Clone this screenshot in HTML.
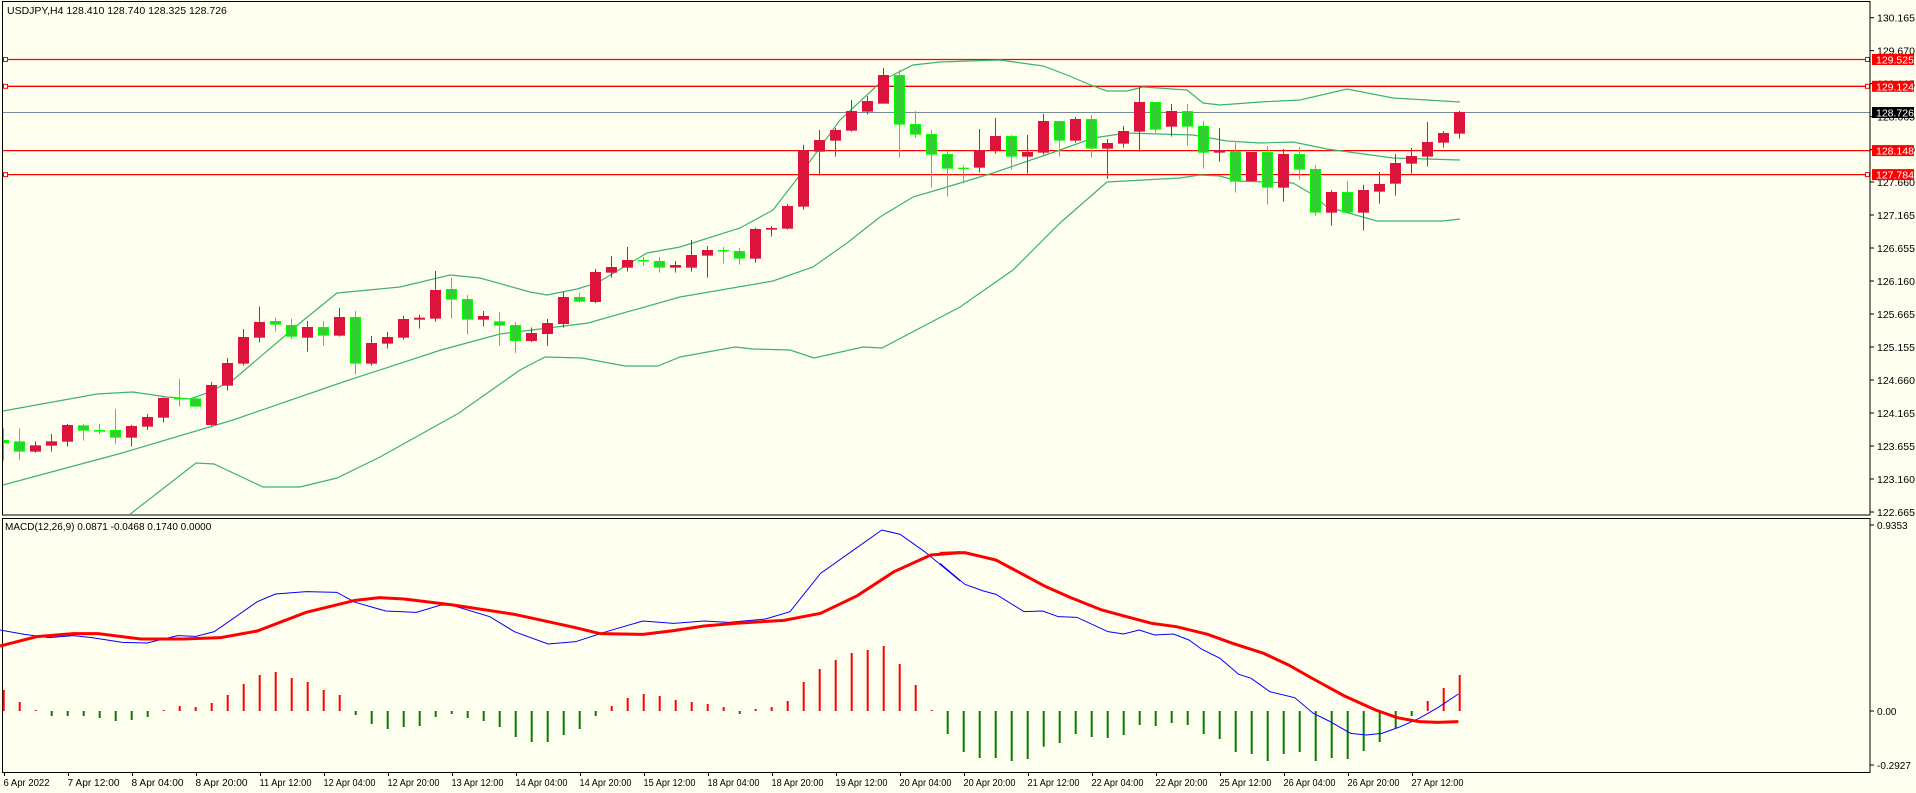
<!DOCTYPE html>
<html><head><meta charset="utf-8">
<style>
html,body{margin:0;padding:0;background:#fffff0;}
svg{display:block;font-family:"Liberation Sans",sans-serif;}
</style></head>
<body>
<svg id="s" width="1916" height="793" viewBox="0 0 1916 793" xmlns="http://www.w3.org/2000/svg">
<rect width="1916" height="793" fill="#fffff0"/>
<g id="g"></g>
<text x="7" y="14" font-size="10.5" fill="#000">USDJPY,H4  128.410 128.740 128.325 128.726</text>
<text x="5" y="530" font-size="10" fill="#000">MACD(12,26,9) 0.0871 -0.0468 0.1740 0.0000</text>
</svg>
<script>
var o='';
function L(x1,y1,x2,y2,c,w){o+='<line x1="'+x1+'" y1="'+y1+'" x2="'+x2+'" y2="'+y2+'" stroke="'+c+'" stroke-width="'+(w||1)+'"/>';}
function R(x,y,w,h,f,s){o+='<rect x="'+x+'" y="'+y+'" width="'+w+'" height="'+h+'" fill="'+f+'"'+(s?' stroke="'+s+'" stroke-width="1"':'')+'/>';}
function P(pts,c,w){o+='<polyline fill="none" stroke="'+c+'" stroke-width="'+w+'" points="'+pts.map(function(p){return p[0]+','+p[1]}).join(' ')+'"/>';}
function T(x,y,t,c,sz,a){o+='<text x="'+x+'" y="'+y+'" font-size="'+(sz||10.5)+'" fill="'+(c||'#000')+'"'+(a?' text-anchor="'+a+'"':'')+'>'+t+'</text>';}
L(3,112.5,1870,112.5,'#778899',1);
[59.5,86.3,150.6,174.6].forEach(function(y){L(3,y,1870,y,'#ff0000',1.3);});
var up=[[3,411],[97,394],[133,392],[167,397],[190,399],[207,393],[233,380],[300,323],[337,293],[400,287],[450,275],[480,278],[530,292],[547,295],[577,289],[597,283],[647,253],[680,247],[740,228],[773,210],[800,175],[840,120],[883,80],[913,65],[940,62],[1000,60],[1043,66],[1067,75],[1093,86],[1107,91],[1127,91],[1143,87],[1187,90],[1203,103],[1220,105],[1260,102],[1300,100],[1347,89],[1393,98],[1460,102]];
var mid=[[3,485],[122,453],[233,420],[343,382],[441,350],[500,334],[588,323],[680,297],[773,281],[813,267],[847,243],[880,217],[913,197],[947,187],[993,173],[1060,150],[1093,138],[1127,133],[1193,135],[1227,141],[1260,143],[1293,142],[1327,149],[1393,158],[1460,160]];
var lo=[[110,530],[129,515],[196,463],[214,464],[263,487],[300,487],[337,478],[380,457],[459,413],[520,370],[545,357],[582,358],[625,366],[658,366],[680,357],[735,347],[753,349],[790,350],[814,358],[863,347],[882,348],[960,307],[1013,270],[1060,223],[1107,182],[1180,178],[1200,175],[1220,176],[1237,181],[1293,183],[1310,193],[1327,207],[1377,221],[1443,221],[1460,219]];
o+='<clipPath id="cp"><rect x="3" y="2" width="1867" height="512"/></clipPath><g clip-path="url(#cp)">';
P(up,'#3cb371',1.2);P(mid,'#3cb371',1.2);P(lo,'#3cb371',1.2);
var A=[['g',780,790,745,842],['g',784,815,745,840],['r',796,815,784,818],['r',784,797,762,815],['r',735,785,732,800],['g',736,752,732,782],['g',750,755,732,762],['g',750,773,687,792],['r',738,773,735,800],['r',711,740,702,750],['r',654,713,652,728],['g',654,657,597,680],['g',655,680,650,680],['r',615,735,606,738],['r',549,617,534,632],['r',471,551,447,557],['r',426,473,380,487],['g',423,434,413,455],['g',435,470,416,477],['r',441,473,423,515],['g',441,467,423,497],['r',411,467,384,470],['g',411,551,393,584],['r',489,551,468,557],['r',471,491,456,506],['r',417,473,408,479],['r',413,419,404,446],['r',330,416,273,425],['g',327,359,294,416],['g',357,419,345,464],['r',408,419,393,440],['g',424,437,396,497]];
var B=[['g',855,903,846,939],['r',879,903,862,906],['r',849,882,837,918],['r',771,852,756,863],['g',771,785,759,788],['r',696,786,687,789],['r',681,698,648,713],['r',660,683,621,695],['g',660,664,651,677],['g',663,683,651,698],['r',675,683,663,698],['r',645,683,600,695],['r',630,647,618,713],['g',630,634,621,671],['g',633,656,624,674],['r',567,656,564,668],['r',564,569,558,590],['r',498,566,492,569],['r',330,500,315,509],['r',300,335,270,407],['r',270,302,264,350],['r',213,272,180,275],['r',183,215,168,224],['r',105,191,84,191],['g',105,254,90,353],['g',252,284,213,293],['g',282,344,270,443],['g',342,386,333,470],['g',383,386,377,431]];
var Cc=[['r',300,353,237,368],['r',258,300,204,311],['g',258,320,255,359],['r',306,320,255,371],['r',213,308,192,314],['g',213,272,213,320],['r',207,272,201,278],['g',207,296,195,323],['r',279,296,267,386],['r',243,281,228,293],['r',156,245,111,305],['g',156,239,156,248],['r',183,230,162,260],['g',183,230,162,287],['g',228,308,213,356],['r',300,308,234,335],['g',303,395,278,428],['r',306,393,306,395],['g',306,413,288,464],['r',312,413,297,455],['g',312,359,291,389],['g',357,488,345,497],['r',426,488,420,527],['g',426,488,393,491],['r',420,488,405,542],['r',402,425,366,461],['r',339,401,312,437],['r',318,341,294,371],['r',276,320,216,350],['r',249,278,243,293],['r',186,251,183,266]];
var all=[];
A.forEach(function(c){all.push([c[0],180+c[1]/3,180+c[2]/3,180+c[3]/3,180+c[4]/3]);});
B.forEach(function(c){all.push([c[0],40+c[1]/3,40+c[2]/3,40+c[3]/3,40+c[4]/3]);});
Cc.forEach(function(c){all.push([c[0],50+c[1]/3,50+c[2]/3,50+c[3]/3,50+c[4]/3]);});
all.forEach(function(c,i){
 var x=Math.round(3.3+16*i)+0.5;
 var col=c[0]=='r'?'#dc143c':'#00ff00';
 L(x,c[3],x,c[4],col,1);
 var h=Math.max(1,c[2]-c[1]);
 if(c[0]=='r')R(x-5.5,c[1],11,h,'#dc143c');
 else{ if(h<3)R(x-5.5,c[1],11,Math.max(1.5,h),'#00ff00');else R(x-5,c[1]+0.5,10,h-1,'#32cd32','#00ff00');}
});
o+='</g>';
[59.5,86.3,174.6].forEach(function(y){R(3.5,y-2,4,4,'#fffff0','#ff0000');R(1865.5,y-2,4,4,'#fffff0','#ff0000');});
R(2.5,1.5,1867.5,513.5,'none','#000');
R(2.5,518.5,1867.5,254,'none','#000');
var pl=[['130.165',17.7],['129.670',50.6],['129.165',83.6],['128.665',116.6],['128.160',149.6],['127.660',182],['127.165',215],['126.655',248],['126.160',281],['125.665',314],['125.155',347],['124.660',380],['124.165',413],['123.655',446],['123.160',479],['122.665',512]];
pl.forEach(function(p){L(1870,p[1],1874,p[1],'#000',1);T(1877,p[1]+4,p[0]);});
[['129.525',59.5,'#ff0000'],['129.124',86.3,'#ff0000'],['128.726',112.5,'#000'],['128.148',150.6,'#ff0000'],['127.784',174.6,'#ff0000']].forEach(function(b){R(1872,b[1]-5.5,42,11,b[2]);T(1876,b[1]+4,b[0],'#fff',10.5);});
[['0.9353',525],['0.00',711],['-0.2927',765]].forEach(function(p){L(1870,p[1],1874,p[1],'#000',1);T(1877,p[1]+4,p[0],'#000',10);});
var h7=[525,561,585,603,603,603,609,618,615,606,585,573,576,564,540,507,480,471,489,501,525,540,600,627,642,636,633,606,597,609,618,636,666,681,681,660,642,603,573,549,537,543,555,561,567,576,597,582,576,558,501,462,435,414,405,393,447,510,585,657,711,729,729,738,732,695,684,657,666,669,660,630,633,624,630,657,672,711,717,738,717,711,738,729,732,708,681,640,603,558,519,480];
var redIdx={};[0,1,2,10,11,12,13,14,15,16,17,18,19,20,21,38,39,40,41,42,43,44,45,47,48,49,50,51,52,53,54,55,56,57,58,89,90,91].forEach(function(i){redIdx[i]=1;});
var zero=711;
h7.forEach(function(z,i){var x=3.7+16*i;var y=515+z/3;L(x,zero,x,y,redIdx[i]?'#ff0000':'#008000',2);});
function cv(arr,x0,sx){return arr.map(function(p){return [x0+p[0]/sx,515+p[1]/3];});}
var b7=[[0,345],[40,358],[80,368],[120,362],[150,368],[200,382],[240,384],[290,362],[320,364],[350,350],[420,260],[450,237],[500,230],[550,232],[580,262],[630,288],[680,292],[720,270],[740,272],[800,305],[840,350],[895,387],[940,380],[990,350],[1050,318],[1100,325],[1150,318],[1190,322],[1250,312],[1290,290],[1340,175],[1390,110],[1440,45],[1470,58],[1510,110],[1568,198]];
var b8=[[0,145],[40,208],[70,228],[90,238],[135,290],[165,288],[190,305],[220,307],[270,350],[295,357],[320,345],[345,360],[375,357],[400,375],[420,402],[450,430],[480,478],[500,490],[530,530],[570,548],[600,595],[625,618],[660,655],[685,660],[710,655],[740,635],[770,610],[800,578],[833,537]];
var r7=[[0,393],[60,365],[120,356],[160,356],[230,372],[300,372],[360,368],[420,348],[500,292],[580,256],[620,248],[660,252],[740,270],[840,298],[900,322],[940,338],[980,356],[1050,358],[1100,347],[1150,333],[1200,325],[1280,316],[1340,295],[1400,242],[1460,170],[1520,120],[1568,113]];
var r8=[[0,115],[40,113],[90,135],[130,175],[170,215],[210,248],[260,285],[300,305],[340,325],[380,335],[430,358],[470,385],[520,415],[560,450],[600,492],[650,543],[700,585],[735,608],[770,620],[800,622],[833,620]];
P(cv(b7,0,1.633).concat(cv(b8,940,1.607)),'#0000ff',1);
P(cv(r7,0,1.633).concat(cv(r8,940,1.607)),'#ff0000',3);
var tl=['6 Apr 2022','7 Apr 12:00','8 Apr 04:00','8 Apr 20:00','11 Apr 12:00','12 Apr 04:00','12 Apr 20:00','13 Apr 12:00','14 Apr 04:00','14 Apr 20:00','15 Apr 12:00','18 Apr 04:00','18 Apr 20:00','19 Apr 12:00','20 Apr 04:00','20 Apr 20:00','21 Apr 12:00','22 Apr 04:00','22 Apr 20:00','25 Apr 12:00','26 Apr 04:00','26 Apr 20:00','27 Apr 12:00'];
tl.forEach(function(t,k){var x=Math.round(3.7+64*k)+0.5;L(x,772,x,776,'#000',1);o+='<text x="'+(x-1)+'" y="786" font-size="10" fill="#000" textLength="'+(t.length>10?52:46)+'" lengthAdjust="spacingAndGlyphs">'+t+'</text>';});
document.getElementById('g').innerHTML=o;
</script>
</body></html>
